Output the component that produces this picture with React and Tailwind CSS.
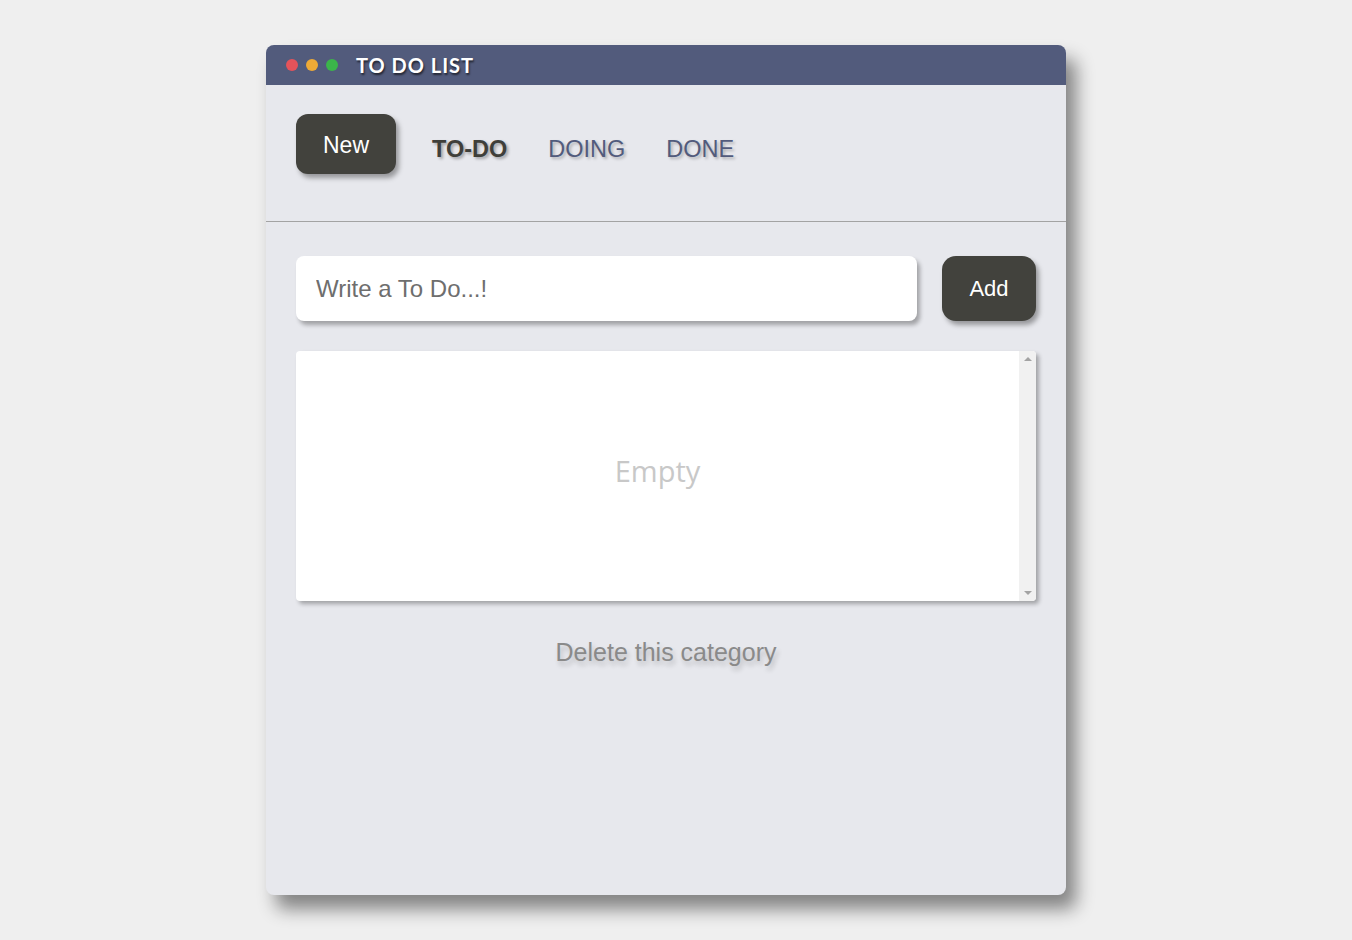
import React, { useState } from "react"

function App() {
  const [todo, setTodo] = useState("")
  const [tab, setTab] = useState("TO-DO")

  const tabs = ["TO-DO", "DOING", "DONE"]

  return (
    <div className="min-h-screen w-full bg-[#efefef] pt-[45px] pl-[266px] font-['Liberation_Sans',Arial,sans-serif]">
      <div className="w-[800px] h-[850px] rounded-[8px] bg-[#e7e8ed] shadow-[10px_14px_18px_rgba(0,0,0,0.45)] overflow-hidden flex flex-col">
        {/* title bar */}
        <div className="h-[40px] bg-[#525b7c] flex items-center pl-[20px] gap-[8px]">
          <span className="w-[12px] h-[12px] rounded-full bg-[#e5535a]" />
          <span className="w-[12px] h-[12px] rounded-full bg-[#eeaa36]" />
          <span className="w-[12px] h-[12px] rounded-full bg-[#3bb54a]" />
          <h1 className="ml-[10px] text-white text-[20px] font-bold tracking-[1px] font-['Lato',sans-serif] [text-shadow:1px_2px_2px_rgba(0,0,0,0.6)]">
            TO DO LIST
          </h1>
        </div>

        {/* nav */}
        <div className="h-[137px] border-b border-[#a3a3a3] px-[30px] pt-[29px] flex items-start">
          <button className="w-[100px] h-[60px] pt-[3px] rounded-[12px] bg-[#42423d] text-white text-[23px] shadow-[3px_4px_5px_rgba(0,0,0,0.35)]">
            New
          </button>
          <div className="flex items-center h-[72px] ml-[36px] gap-[41px] text-[23.5px]">
            {tabs.map((t) => (
              <button
                key={t}
                onClick={() => setTab(t)}
                className={
                  tab === t
                    ? "font-bold text-[#3f3f3a] [text-shadow:2px_2px_3px_rgba(0,0,0,0.3)]"
                    : "text-[#525b7c] [text-shadow:2px_2px_3px_rgba(0,0,0,0.25)]"
                }
              >
                {t}
              </button>
            ))}
          </div>
        </div>

        {/* content */}
        <div className="px-[30px] pt-[34px] flex flex-col">
          <div className="flex gap-[25px]">
            <input
              value={todo}
              onChange={(e) => setTodo(e.target.value)}
              placeholder="Write a To Do...!"
              className="w-[621px] h-[65px] rounded-[8px] bg-white px-[20px] text-[24px] text-[#333] placeholder:text-[#6e6e6e] outline-none shadow-[3px_4px_4px_rgba(0,0,0,0.3)]"
            />
            <button className="w-[94px] h-[65px] rounded-[14px] bg-[#42423d] text-white text-[22px] shadow-[3px_4px_5px_rgba(0,0,0,0.35)]">
              Add
            </button>
          </div>

          <div className="mt-[30px] w-[740px] h-[250px] rounded-[4px] bg-white flex overflow-hidden shadow-[3px_3px_4px_rgba(0,0,0,0.3)]">
            <div className="flex-1 flex items-center justify-center">
              <p className="text-[29px] text-[#c8c8c8] font-['Open_Sans',sans-serif] mt-[-10px]">
                Empty
              </p>
            </div>
            {/* scrollbar track */}
            <div className="w-[17px] bg-[#f1f1f1] flex flex-col items-center justify-between py-[6px]">
              <span className="w-0 h-0 border-l-[4px] border-r-[4px] border-b-[4px] border-l-transparent border-r-transparent border-b-[#a3a3a3]" />
              <span className="w-0 h-0 border-l-[4px] border-r-[4px] border-t-[4px] border-l-transparent border-r-transparent border-t-[#a3a3a3]" />
            </div>
          </div>

          <div className="flex justify-center mt-[33px]">
            <button className="text-[25px] text-[#8a8a8a] [text-shadow:2px_4px_5px_rgba(0,0,0,0.2)]">
              Delete this category
            </button>
          </div>
        </div>
      </div>
    </div>
  )
}

export default App
